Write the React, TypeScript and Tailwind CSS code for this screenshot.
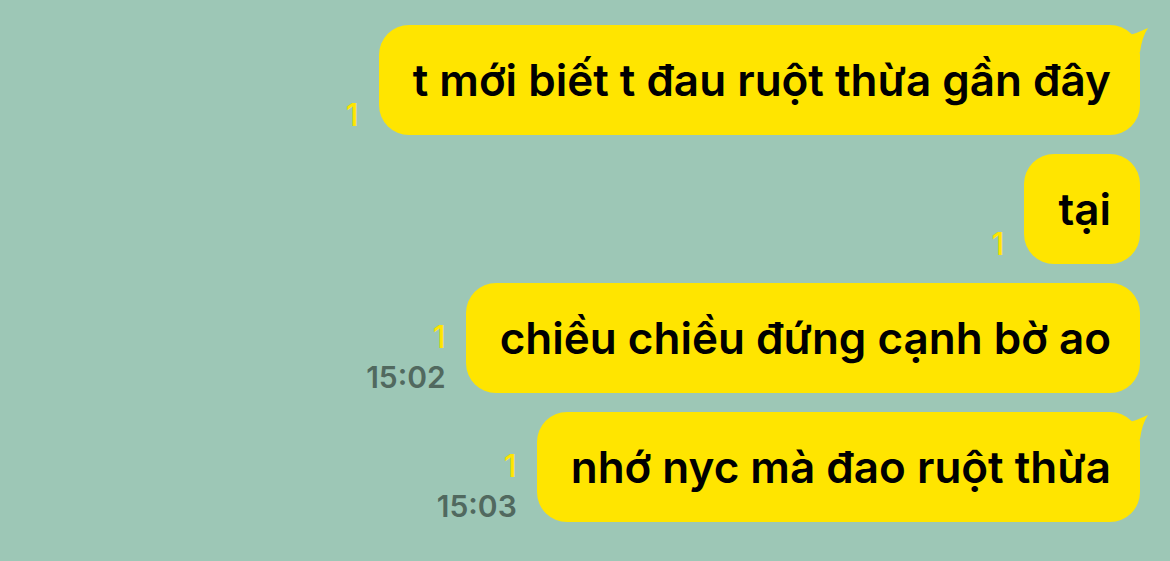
import React from "react";

type Msg = { text: string; time?: string; tail?: boolean };

const msgs: Msg[] = [
  { text: "t mới biết t đau ruột thừa gần đây", tail: true },
  { text: "tại" },
  { text: "chiều chiều đứng cạnh bờ ao", time: "15:02" },
  { text: "nhớ nyc mà đao ruột thừa", time: "15:03", tail: true },
];

function Tail() {
  return (
    <svg
      className="absolute top-0 left-[calc(100%-20px)]"
      width="30"
      height="30"
      viewBox="0 0 30 30"
    >
      <path d="M3 12 Q16 9 28 3 Q22 12 20 27 L3 27 Z" fill="#ffe500" />
    </svg>
  );
}

export default function App() {
  return (
    <div
      className="w-[1170px] h-[561px] bg-[#9dc7b6] flex flex-col items-end gap-[19px] pt-[25px] pr-[30px] overflow-hidden"
      style={{ fontFamily: "Inter, 'Noto Sans', sans-serif" }}
    >
      {msgs.map((m, i) => (
        <div key={i} className="flex items-end gap-[20px]">
          <div className="flex flex-col items-end mb-[-2px]">
            <span className="text-[31px] leading-[36px] text-[#ffe500] font-medium mb-[4px]">1</span>
            {m.time && (
              <span className="text-[30px] leading-[36px] text-[#51695f] font-semibold">{m.time}</span>
            )}
          </div>
          <div className="relative h-[110px] rounded-[30px] bg-[#ffe500] pl-[34px] pr-[29px] flex items-center">
            <span className="text-[44px] font-semibold text-black leading-none">
              {m.text}
            </span>
            {m.tail && <Tail />}
          </div>
        </div>
      ))}
    </div>
  );
}
